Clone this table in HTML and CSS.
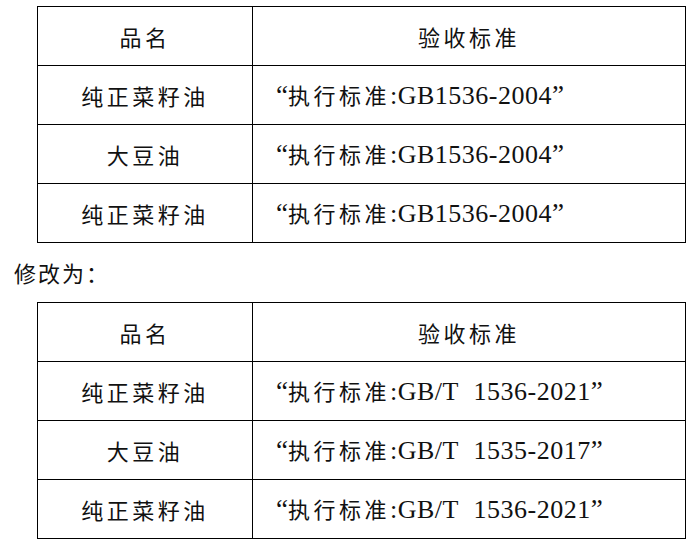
FILE: index.html
```html
<!DOCTYPE html>
<html lang="zh-CN">
<head>
<meta charset="utf-8">
<title>验收标准</title>
<link rel="stylesheet" href="styles.css">
</head>
<body>
<div class="doc">
  <table class="spec">
    <tr><td class="name">品名</td><td class="std head">验收标准</td></tr>
    <tr><td class="name">纯正菜籽油</td><td class="std"><span class="q ql">“</span>执行标准<span class="lat">:GB1536-2004</span><span class="q">”</span></td></tr>
    <tr><td class="name">大豆油</td><td class="std"><span class="q ql">“</span>执行标准<span class="lat">:GB1536-2004</span><span class="q">”</span></td></tr>
    <tr><td class="name">纯正菜籽油</td><td class="std"><span class="q ql">“</span>执行标准<span class="lat">:GB1536-2004</span><span class="q">”</span></td></tr>
  </table>
  <p class="note">修改为：</p>
  <table class="spec">
    <tr><td class="name">品名</td><td class="std head">验收标准</td></tr>
    <tr><td class="name">纯正菜籽油</td><td class="std"><span class="q ql">“</span>执行标准<span class="lat">:GB/T 1536-2021</span><span class="q">”</span></td></tr>
    <tr><td class="name">大豆油</td><td class="std"><span class="q ql">“</span>执行标准<span class="lat">:GB/T 1535-2017</span><span class="q">”</span></td></tr>
    <tr><td class="name">纯正菜籽油</td><td class="std"><span class="q ql">“</span>执行标准<span class="lat">:GB/T 1536-2021</span><span class="q">”</span></td></tr>
  </table>
</div>
</body>
</html>
```

FILE: styles.css
```css
html, body {
  margin: 0;
  padding: 0;
  background: #fff;
}

body {
  font-family: "Noto Sans CJK SC", "Liberation Serif", serif;
  font-size: 22px;
  color: #111;
}

.doc {
  display: flex;
  flex-direction: column;
  padding-top: 6px;
}

.spec {
  border-collapse: collapse;
  margin-left: 37px;
  width: 649px;
  table-layout: fixed;
}

.spec tr {
  height: 59px;
}

.spec td {
  border: 1px solid #000;
  padding: 0;
  vertical-align: middle;
  letter-spacing: 3.5px;
  line-height: 30px;
  white-space: nowrap;
}

.spec td.name {
  width: 214px;
  text-align: center;
}

.spec td.std {
  text-align: left;
  padding-left: 20px;
}

.spec td.std.head {
  text-align: center;
  padding-left: 0;
}

.q {
  font-family: "Liberation Serif", serif;
  font-size: 27px;
  letter-spacing: 0;
  display: inline-block;
  width: 15px;
}

.q.ql {
  text-align: right;
}

.lat {
  font-family: "Liberation Serif", serif;
  font-size: 26px;
  letter-spacing: 0.5px;
  word-spacing: 8px;
}

.note {
  margin: 0 0 0 14px;
  height: 59px;
  line-height: 59px;
  letter-spacing: 2px;
}
```
